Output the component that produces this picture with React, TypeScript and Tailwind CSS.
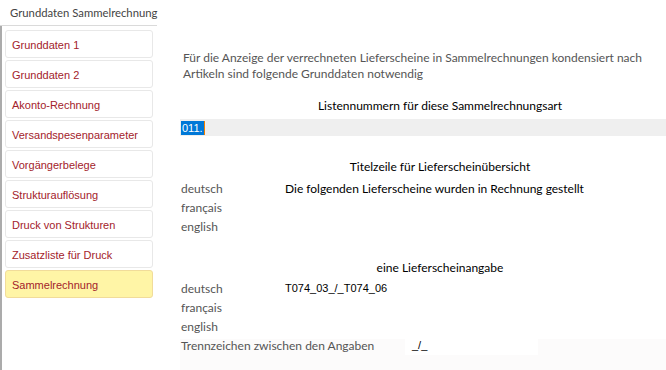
import React from "react";

const navItems = [
  "Grunddaten 1",
  "Grunddaten 2",
  "Akonto-Rechnung",
  "Versandspesenparameter",
  "Vorgängerbelege",
  "Strukturauflösung",
  "Druck von Strukturen",
  "Zusatzliste für Druck",
  "Sammelrechnung",
];

const ui = "font-['Segoe_UI',Lato,sans-serif]";
const arial = "font-['Liberation_Sans',Arial,sans-serif]";

function LangRows({ values, mono }: { values: string[]; mono?: boolean }) {
  const langs = ["deutsch", "français", "english"];
  return (
    <div className="flex flex-col">
      {langs.map((lang, i) => (
        <div key={lang} className="flex h-[19px] items-center">
          <div className="w-[100px] pl-[1px] text-[12px] text-[#555]">{lang}</div>
          <div
            className={`flex h-full flex-1 items-center bg-white pl-[5px] text-black ${
              mono ? `text-[11px] ${arial}` : "text-[12px]"
            }`}
          >
            {values[i] ?? ""}
          </div>
        </div>
      ))}
    </div>
  );
}

export default function App() {
  const active = "Sammelrechnung";

  return (
    <div className={`flex h-[370px] w-[666px] flex-col overflow-hidden bg-white ${ui}`}>
      <div className="flex h-[26px] w-[157px] items-center whitespace-nowrap border-b border-[#dadada] pl-[10px] pt-[2px] text-[11.3px] text-[#444]">
        Grunddaten Sammelrechnung
      </div>

      <div className="flex flex-1">
        <nav className="flex w-[180px] flex-col gap-[2px] border-l-2 border-[#ababab] pl-[3px] pt-[4px]">
          {navItems.map((item) => (
            <div
              key={item}
              className={`flex h-[28px] w-[148px] items-center rounded-[3px] border px-[6px] pt-[2px] text-[11px] text-[#a3222b] ${arial} ${
                item === active
                  ? "border-[#f1dc9a] bg-[#fff5a6]"
                  : "border-[#e8e8e8] bg-white"
              }`}
            >
              {item}
            </div>
          ))}
        </nav>

        <main className="flex flex-1 flex-col overflow-hidden bg-[#fcfbfb]">
          <div className="bg-white pb-[3px]">
            <p className="mt-[24px] whitespace-nowrap pl-[3px] text-[12px] leading-[16px] text-[#555]">
              Für die Anzeige der verrechneten Lieferscheine in Sammelrechnungen kondensiert nach
              <br />
              Artikeln sind folgende Grunddaten notwendig
            </p>

            <div className="mt-[16px] w-[520px] text-center text-[12px] leading-[16px] text-black">
              Listennummern für diese Sammelrechnungsart
            </div>

            <div className="mt-[5px] flex h-[17px] items-center bg-[#efefef] pl-[1px]">
              <span className={`bg-[#0078d7] px-[1px] text-[11px] leading-[14px] text-white ${arial}`}>
                011.
              </span>
              <span className="h-[14px] w-[1px] bg-[#f08000]" />
            </div>

            <div className="mt-[23px] w-[520px] text-center text-[12px] leading-[16px] text-black">
              Titelzeile für Lieferscheinübersicht
            </div>

            <div className="pt-[4px]">
              <LangRows values={["Die folgenden Lieferscheine wurden in Rechnung gestellt"]} />
            </div>

            <div className="mt-[24px] w-[520px] text-center text-[12px] leading-[16px] text-black">
              eine Lieferscheinangabe
            </div>

            <div className="pt-[3px]">
              <LangRows mono values={["T074_03_/_T074_06"]} />
            </div>
          </div>

          <div className="-mt-[3px] flex h-[19px] items-center">
            <div className="w-[225px] whitespace-nowrap pl-[1px] text-[12px] text-[#555]">
              Trennzeichen zwischen den Angaben
            </div>
            <div className={`flex h-full w-[133px] items-center bg-white pl-[7px] text-[11px] text-black ${arial}`}>
              _/_
            </div>
          </div>
        </main>
      </div>
    </div>
  );
}
